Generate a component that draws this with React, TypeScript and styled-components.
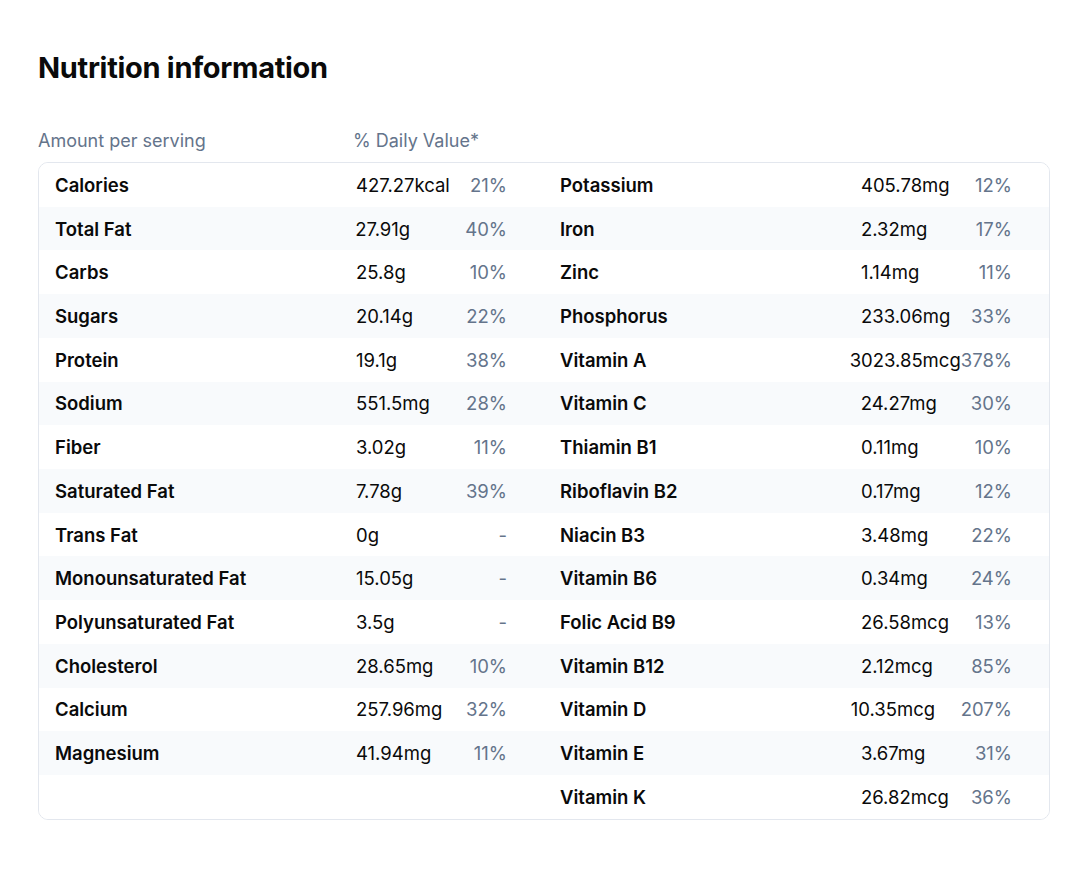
import React from "react";
import styled, { createGlobalStyle } from "styled-components";

const GlobalStyle = createGlobalStyle`
  html, body { margin: 0; padding: 0; background: #ffffff; }
  body { font-family: Inter, "Noto Sans", "Liberation Sans", sans-serif; color: #0b0b0c; }
  * { box-sizing: border-box; }
`;

const Page = styled.main`
  padding: 48px 31px 0 38px;
  width: 1080px;
`;

const Title = styled.h1`
  margin: 0 0 38px 0;
  font-size: 29px;
  line-height: 40px;
  font-weight: 700;
  letter-spacing: -0.3px;
  color: #0a0a0a;
`;

const HeaderRow = styled.div`
  display: flex;
  align-items: center;
  height: 28px;
  margin-bottom: 8px;
  font-size: 18px;
  color: #64748b;
`;

const HeaderCell = styled.div<{ $w?: number }>`
  width: ${(p) => (p.$w ? `${p.$w}px` : "auto")};
`;

const Card = styled.section`
  border: 1px solid #e3e7ee;
  border-radius: 10px;
  overflow: hidden;
  width: 1012px;
`;

const Row = styled.div<{ $striped: boolean }>`
  display: grid;
  grid-template-columns: 1fr 1fr;
  height: 43.73px;
  background: ${(p) => (p.$striped ? "#f8fafc" : "#ffffff")};
`;

const Half = styled.div`
  display: flex;
  align-items: center;
  padding: 0 37px 0 16px;
  font-size: 18.5px;
  min-width: 0;
`;

const Name = styled.div`
  flex: 1 1 auto;
  font-weight: 600;
  color: #0a0a0a;
  white-space: nowrap;
  min-width: 0;
`;

const Value = styled.div`
  min-width: 110px;
  white-space: nowrap;
  color: #0a0a0a;
`;

const Pct = styled.div`
  min-width: 41px;
  text-align: right;
  white-space: nowrap;
  color: #64748b;
`;

type Item = [string, string, string];

const left: Item[] = [
  ["Calories", "427.27kcal", "21%"],
  ["Total Fat", "27.91g", "40%"],
  ["Carbs", "25.8g", "10%"],
  ["Sugars", "20.14g", "22%"],
  ["Protein", "19.1g", "38%"],
  ["Sodium", "551.5mg", "28%"],
  ["Fiber", "3.02g", "11%"],
  ["Saturated Fat", "7.78g", "39%"],
  ["Trans Fat", "0g", "-"],
  ["Monounsaturated Fat", "15.05g", "-"],
  ["Polyunsaturated Fat", "3.5g", "-"],
  ["Cholesterol", "28.65mg", "10%"],
  ["Calcium", "257.96mg", "32%"],
  ["Magnesium", "41.94mg", "11%"],
];

const right: Item[] = [
  ["Potassium", "405.78mg", "12%"],
  ["Iron", "2.32mg", "17%"],
  ["Zinc", "1.14mg", "11%"],
  ["Phosphorus", "233.06mg", "33%"],
  ["Vitamin A", "3023.85mcg", "378%"],
  ["Vitamin C", "24.27mg", "30%"],
  ["Thiamin B1", "0.11mg", "10%"],
  ["Riboflavin B2", "0.17mg", "12%"],
  ["Niacin B3", "3.48mg", "22%"],
  ["Vitamin B6", "0.34mg", "24%"],
  ["Folic Acid B9", "26.58mcg", "13%"],
  ["Vitamin B12", "2.12mcg", "85%"],
  ["Vitamin D", "10.35mcg", "207%"],
  ["Vitamin E", "3.67mg", "31%"],
  ["Vitamin K", "26.82mcg", "36%"],
];

const Cell: React.FC<{ item?: Item }> = ({ item }) => (
  <Half>
    {item && (
      <>
        <Name>{item[0]}</Name>
        <Value>{item[1]}</Value>
        <Pct>{item[2]}</Pct>
      </>
    )}
  </Half>
);

export default function App() {
  const count = Math.max(left.length, right.length);
  return (
    <>
      <GlobalStyle />
      <Page>
        <Title>Nutrition information</Title>
        <HeaderRow>
          <HeaderCell $w={315}>Amount per serving</HeaderCell>
          <HeaderCell>% Daily Value*</HeaderCell>
        </HeaderRow>
        <Card>
          {Array.from({ length: count }).map((_, i) => (
            <Row key={i} $striped={i % 2 === 1}>
              <Cell item={left[i]} />
              <Cell item={right[i]} />
            </Row>
          ))}
        </Card>
      </Page>
    </>
  );
}
